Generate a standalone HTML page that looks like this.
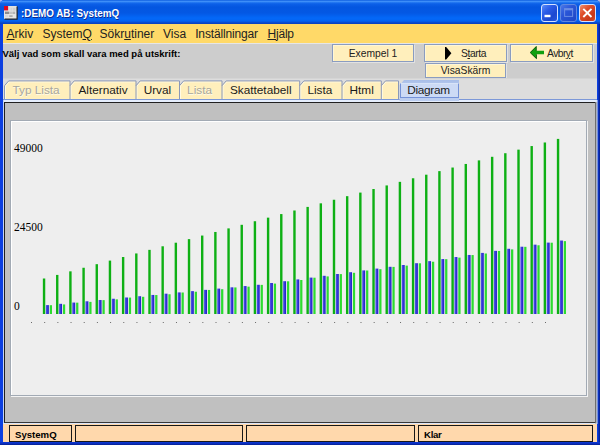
<!DOCTYPE html>
<html><head><meta charset="utf-8"><title>:DEMO AB: SystemQ</title>
<style>
html,body{margin:0;padding:0}
body{width:600px;height:445px;overflow:hidden;position:relative;background:#cdcdcd;font-family:"Liberation Sans",sans-serif;}
div{position:absolute;box-sizing:border-box}
span{position:absolute;white-space:nowrap}
#cornerl{left:0;top:0;width:300px;height:8px;background:#a4b8ee}
#cornerr{left:300px;top:0;width:300px;height:8px;background:#a8b8ea}
#frame{left:0;top:0;width:600px;height:445px;background:linear-gradient(90deg,#0c3fe0 0,#0c3fe0 598px,#08249c 599px,#08249c 600px);border-radius:4.5px 4.5px 0 0;}
#fbot{left:0;top:442px;width:600px;height:3px;background:linear-gradient(#0c3ad8,#0a2cb8 60%,#08208c)}
#title{left:0;top:0;width:600px;height:24px;border-radius:4.5px 4.5px 0 0;background:linear-gradient(#0e5ee0 0,#3e8ef8 1.5px,#2074f0 2.6px,#0c60e8 3.8px,#0456e0 7px,#0458e4 13px,#0468f8 18px,#0464f2 21px,#0a4cd0 22.5px,#0a3ebc 24px);}
#ttext{left:21px;top:5px;color:#fff;font-weight:bold;font-size:11.2px;line-height:16px;text-shadow:1px 1px 0 #0a2a90;transform:scaleX(0.88);transform-origin:0 0}
.wb{top:4px;width:17px;height:17.5px;border:1px solid #d4e2ff;border-radius:3px}
#icon{left:4px;top:5.7px;width:14px;height:14px}
#client{left:3px;top:24px;width:594px;height:418px;background:#cdcdcd}
#menu{left:3px;top:24px;width:594px;height:19px;background:#ffd968}
#menuhl{left:3px;top:43px;width:594px;height:1px;background:#e6e6e6}
.mi{top:27px;margin-left:-0.5px;font-size:12px;line-height:14px;color:#222}
u{text-decoration:underline}
#lbl{left:2.5px;top:47.7px;font-size:9.5px;font-weight:bold;color:#000;line-height:12px}
.btn{background:#ffefbc;border:1px solid #8a9cc0;box-shadow:inset 1px 1px 0 #fff6d6, 1px 1px 0 #e2e2e2;font-size:10.3px;line-height:15px;text-align:center;color:#222;white-space:nowrap}
.btn span{top:0}
#tabarea{left:3px;top:78px;width:594px;height:21px;background:linear-gradient(#d4d4d4 0,#d6d6d6 1px,#dddddd 1px)}
.tt{top:83.3px;margin-left:-0.5px;text-align:center;font-size:11.8px;line-height:14px;color:#1a1a1a}
.tt.dis{color:#a6a69e;text-shadow:0.7px 0.7px 0 #fffbe8}
#tabline{left:3px;top:99px;width:594px;height:3px;background:linear-gradient(#7c98d8 0,#7c98d8 1px,#e6eefc 1px,#e6eefc 3px)}
#lefthl{left:3px;top:100px;width:1px;height:324px;background:#c4d4f4}
#righthl{left:595px;top:100px;width:3px;height:324px}
#bothl{left:3px;top:423px;width:594px;height:1px;background:#dce6fa}
#seltab{left:399px;top:80px;width:61px;height:21px}
#selin{left:400px;top:83px;width:59px;height:15px;background:#ccdaf5;border:1px solid #7492d8;border-top:1px solid #d8e4f8}
#seltxt{left:407.3px;top:83.3px;font-size:11.8px;line-height:14px;color:#1a1a1a;letter-spacing:-0.3px}
#panel{left:4px;top:102px;width:592px;height:321px;background:#c0c0c0;border:1px solid #202020;border-right-color:#383838;border-bottom-color:#383838}
#chart{left:10px;top:120px;width:577px;height:276px;background:#eeeeee;border:1px solid #a2aab4;box-shadow:inset 1px 1px 0 #fff, 1px 1px 0 #f4f4f4}
.yl{font-family:"Liberation Serif",serif;font-size:11.5px;line-height:12px;color:#000;left:14px}
#status{left:3px;top:424px;width:594px;height:18px;background:#ffd8ac}
.sc{top:425px;height:17px;border:1px solid #181818;background:#ffd8ac;font-size:9.6px;font-weight:bold;line-height:18px;color:#000;padding-left:5px}
</style></head><body>
<div id="cornerl"></div><div id="cornerr"></div>
<div id="frame"></div>
<div id="fbot"></div>
<div id="title"></div>
<div id="icon"><svg width="14" height="14" viewBox="0 0 14 14"><rect x="0" y="0" width="13" height="13" fill="#e6e6e4"/><rect x="4" y="0.3" width="9" height="4.6" fill="#dededc"/><rect x="0" y="0" width="4.1" height="4.4" fill="#e00820"/><rect x="1" y="5.6" width="4" height="2.4" fill="#8c8c8c"/><rect x="5" y="5.6" width="3" height="2.4" fill="#c4c4c4"/><rect x="8.4" y="5.6" width="2.8" height="2.4" fill="#b4b4b4"/><rect x="5.2" y="9.4" width="3.4" height="1.4" fill="#a0a0a0"/><rect x="1" y="8.6" width="3.4" height="2.6" fill="#d8d8d8"/><rect x="9" y="2" width="2.4" height="2.6" fill="#d0d0d0"/><rect x="6.6" y="2" width="1.6" height="2.6" fill="#d4d4d4"/><path d="M0.6 13.1H13.1V0.6" stroke="#242424" stroke-width="1.2" fill="none"/></svg></div>
<span id="ttext">:DEMO AB: SystemQ</span>
<div class="wb" style="left:541px;background:linear-gradient(135deg,#5a8cf8 0,#2a5ce8 35%,#1c48d0 70%,#2858e0 100%)"><svg width="17" height="17.5" viewBox="0 0 17 17.5" style="position:absolute;left:-1px;top:-1px"><rect x="3.5" y="10.8" width="6" height="2.4" fill="#fff"/></svg></div>
<div class="wb" style="left:559.5px;background:linear-gradient(135deg,#4a78e8 0,#2a56d8 40%,#1e46c4 100%);border-color:#6088e0"><svg width="17" height="17.5" viewBox="0 0 17 17.5" style="position:absolute;left:-1px;top:-1px"><rect x="4.6" y="4.8" width="8" height="7.6" fill="none" stroke="#6a8ce4" stroke-width="1"/><rect x="4.1" y="4.3" width="9" height="2" fill="#6a8ce4"/></svg></div>
<div class="wb" style="left:579px;background:linear-gradient(135deg,#f09070 0,#e0502c 35%,#c83818 75%,#d8502c 100%)"><svg width="17" height="17.5" viewBox="0 0 17 17.5" style="position:absolute;left:-1px;top:-1px"><path d="M4.3 4.8L12.5 13M12.5 4.8L4.3 13" stroke="#fff" stroke-width="1.9" fill="none"/></svg></div>
<div id="client"></div>
<div id="menu"></div><div id="menuhl"></div>
<span class="mi" style="left:7px"><u>A</u>rkiv</span>
<span class="mi" style="left:43px">System<u>Q</u></span>
<span class="mi" style="left:100px">Sökr<u>u</u>tiner</span>
<span class="mi" style="left:163.5px">Visa</span>
<span class="mi" style="left:195.7px;letter-spacing:-0.15px">Inställningar</span>
<span class="mi" style="left:268px;letter-spacing:-0.2px"><u>H</u>jälp</span>
<span id="lbl">Välj vad som skall vara med på utskrift:</span>
<div class="btn" style="left:332px;top:44px;width:82px;height:18px;line-height:17px">Exempel 1</div>
<div class="btn" style="left:424px;top:44px;width:83px;height:18px"><svg style="position:absolute;left:20px;top:1.8px" width="7" height="13" viewBox="0 0 7 13"><path d="M0 0L1.2 0L6.4 6.2L1.2 12.6L0 12.6Z" fill="#000"/></svg><span style="left:36px;top:0.5px;letter-spacing:-0.4px">S<u>t</u>arta</span></div>
<div class="btn" style="left:510px;top:44px;width:83px;height:18px"><svg style="position:absolute;left:19px;top:1px" width="15" height="14" viewBox="0 0 15 14"><path d="M0 6.5L6.5 0L6.5 4.8H14V8.2H6.5L6.5 13Z" fill="#10a010"/><path d="M0.3 6.5L6.2 0.6V4.8M6.5 8.4V12.6L0.3 6.7" fill="none" stroke="#064a08" stroke-width="0.8"/></svg><span style="left:36px;top:0.5px;letter-spacing:-0.55px">Avbr<u>y</u>t</span></div>
<div class="btn" style="left:425px;top:63px;width:81px;height:15px;line-height:14px">VisaSkärm</div>
<div id="tabarea"></div>
<div id="tabline"></div>
<svg style="position:absolute;left:0;top:0" width="600" height="110" viewBox="0 0 600 110">
<path d="M4.5 99.0V85.7L8.7 80.9H70.0V99.0Z" fill="#ffefbc"/>
<path d="M70.0 99.0V85.7L74.2 80.9H136.0V99.0Z" fill="#ffefbc"/>
<path d="M136.0 99.0V85.7L140.2 80.9H179.5V99.0Z" fill="#ffefbc"/>
<path d="M179.5 99.0V85.7L183.7 80.9H222.0V99.0Z" fill="#ffefbc"/>
<path d="M222.0 99.0V85.7L226.2 80.9H299.7V99.0Z" fill="#ffefbc"/>
<path d="M299.7 99.0V85.7L303.9 80.9H342.0V99.0Z" fill="#ffefbc"/>
<path d="M342.0 99.0V85.7L346.2 80.9H381.3V99.0Z" fill="#ffefbc"/>
<path d="M381.3 99.0V85.7L385.5 80.9H398.5V99.0Z" fill="#ffefbc"/>
<path d="M5.5 99.0V86.10000000000001L9.1 81.9H69.5" fill="none" stroke="#fffae4" stroke-width="1"/>
<path d="M71.0 99.0V86.10000000000001L74.6 81.9H135.5" fill="none" stroke="#fffae4" stroke-width="1"/>
<path d="M137.0 99.0V86.10000000000001L140.6 81.9H179.0" fill="none" stroke="#fffae4" stroke-width="1"/>
<path d="M180.5 99.0V86.10000000000001L184.1 81.9H221.5" fill="none" stroke="#fffae4" stroke-width="1"/>
<path d="M223.0 99.0V86.10000000000001L226.6 81.9H299.2" fill="none" stroke="#fffae4" stroke-width="1"/>
<path d="M300.7 99.0V86.10000000000001L304.3 81.9H341.5" fill="none" stroke="#fffae4" stroke-width="1"/>
<path d="M343.0 99.0V86.10000000000001L346.6 81.9H380.8" fill="none" stroke="#fffae4" stroke-width="1"/>
<path d="M382.3 99.0V86.10000000000001L385.90000000000003 81.9H398.0" fill="none" stroke="#fffae4" stroke-width="1"/>
<path d="M4.5 85.7L8.7 80.9H70.0V99.0" fill="none" stroke="#8a98b8" stroke-width="1"/>
<path d="M70.0 85.7L74.2 80.9H136.0V99.0" fill="none" stroke="#8a98b8" stroke-width="1"/>
<path d="M136.0 85.7L140.2 80.9H179.5V99.0" fill="none" stroke="#8a98b8" stroke-width="1"/>
<path d="M179.5 85.7L183.7 80.9H222.0V99.0" fill="none" stroke="#8a98b8" stroke-width="1"/>
<path d="M222.0 85.7L226.2 80.9H299.7V99.0" fill="none" stroke="#8a98b8" stroke-width="1"/>
<path d="M299.7 85.7L303.9 80.9H342.0V99.0" fill="none" stroke="#8a98b8" stroke-width="1"/>
<path d="M342.0 85.7L346.2 80.9H381.3V99.0" fill="none" stroke="#8a98b8" stroke-width="1"/>
<path d="M381.3 85.7L385.5 80.9H398.5V99.0" fill="none" stroke="#8a98b8" stroke-width="1"/>
<path d="M4.5 99.0V85.7" fill="none" stroke="#8a98b8" stroke-width="1"/>
</svg>
<span class="tt dis" style="left:3.8px;width:65.5px">Typ Lista</span>
<span class="tt" style="left:70.5px;width:66.0px">Alternativ</span>
<span class="tt" style="left:136.2px;width:43.5px">Urval</span>
<span class="tt dis" style="left:178.8px;width:42.5px">Lista</span>
<span class="tt" style="left:222.4px;width:77.69999999999999px">Skattetabell</span>
<span class="tt" style="left:299.2px;width:42.30000000000001px">Lista</span>
<span class="tt" style="left:342.5px;width:39.30000000000001px">Html</span>
<div id="seltab"><svg width="61" height="21" viewBox="0 0 61 21" style="position:absolute;left:0;top:0"><defs><linearGradient id="sg" x1="0" y1="0" x2="0" y2="1"><stop offset="0" stop-color="#a8bee8"/><stop offset="0.2" stop-color="#b2c6ec"/><stop offset="1" stop-color="#bccef0"/></linearGradient></defs><path d="M0.6 21V5.6L5 0H60V21Z" fill="url(#sg)"/></svg></div><div id="selin"></div><span id="seltxt">Diagram</span>
<div id="lefthl"></div><div id="bothl"></div>
<div id="panel"></div>
<div id="chart"></div>
<div id="righthl"><svg width="3" height="324" viewBox="0 0 3 324" style="position:absolute;left:0;top:0"><rect x="0" y="2" width="3" height="322" fill="#c0c0c0"/><rect x="0" y="0" width="3" height="2" fill="#e6eefc"/><rect x="0.45" y="2" width="1" height="321" fill="#2c2c2c"/><rect x="1.45" y="0" width="1.1" height="324" fill="#d0dcf8"/><rect x="2.55" y="0" width="0.45" height="324" fill="#0c3fe0"/></svg></div>
<svg style="position:absolute;left:0;top:0" width="600" height="445" viewBox="0 0 600 445">
<defs><linearGradient id="bg" x1="0" y1="0" x2="1" y2="0"><stop offset="0" stop-color="#5458ec"/><stop offset="1" stop-color="#1a1cc4"/></linearGradient></defs>
<rect x="42.85" y="278.50" width="2.4" height="35.50" fill="#0eb014"/>
<rect x="45.90" y="305.10" width="2.95" height="8.90" fill="url(#bg)"/>
<rect x="49.75" y="305.20" width="2.25" height="8.80" fill="#2cdc30"/>
<rect x="56.03" y="274.92" width="2.4" height="39.08" fill="#0eb014"/>
<rect x="59.08" y="303.83" width="2.95" height="10.17" fill="url(#bg)"/>
<rect x="62.93" y="304.43" width="2.25" height="9.57" fill="#2cdc30"/>
<rect x="69.21" y="271.34" width="2.4" height="42.66" fill="#0eb014"/>
<rect x="72.26" y="302.56" width="2.95" height="11.44" fill="url(#bg)"/>
<rect x="76.11" y="302.66" width="2.25" height="11.34" fill="#2cdc30"/>
<rect x="82.39" y="267.76" width="2.4" height="46.24" fill="#0eb014"/>
<rect x="85.44" y="301.29" width="2.95" height="12.71" fill="url(#bg)"/>
<rect x="89.29" y="301.89" width="2.25" height="12.11" fill="#2cdc30"/>
<rect x="95.57" y="264.18" width="2.4" height="49.82" fill="#0eb014"/>
<rect x="98.62" y="300.02" width="2.95" height="13.98" fill="url(#bg)"/>
<rect x="102.47" y="300.12" width="2.25" height="13.88" fill="#2cdc30"/>
<rect x="108.75" y="260.60" width="2.4" height="53.40" fill="#0eb014"/>
<rect x="111.80" y="298.75" width="2.95" height="15.25" fill="url(#bg)"/>
<rect x="115.65" y="299.35" width="2.25" height="14.65" fill="#2cdc30"/>
<rect x="121.93" y="257.02" width="2.4" height="56.98" fill="#0eb014"/>
<rect x="124.98" y="297.48" width="2.95" height="16.52" fill="url(#bg)"/>
<rect x="128.83" y="297.58" width="2.25" height="16.42" fill="#2cdc30"/>
<rect x="135.11" y="253.44" width="2.4" height="60.56" fill="#0eb014"/>
<rect x="138.16" y="296.21" width="2.95" height="17.79" fill="url(#bg)"/>
<rect x="142.01" y="296.81" width="2.25" height="17.19" fill="#2cdc30"/>
<rect x="148.29" y="249.86" width="2.4" height="64.14" fill="#0eb014"/>
<rect x="151.34" y="294.94" width="2.95" height="19.06" fill="url(#bg)"/>
<rect x="155.19" y="295.04" width="2.25" height="18.96" fill="#2cdc30"/>
<rect x="161.47" y="246.28" width="2.4" height="67.72" fill="#0eb014"/>
<rect x="164.52" y="293.67" width="2.95" height="20.33" fill="url(#bg)"/>
<rect x="168.37" y="294.27" width="2.25" height="19.73" fill="#2cdc30"/>
<rect x="174.64" y="242.71" width="2.4" height="71.29" fill="#0eb014"/>
<rect x="177.69" y="292.40" width="2.95" height="21.60" fill="url(#bg)"/>
<rect x="181.54" y="292.50" width="2.25" height="21.50" fill="#2cdc30"/>
<rect x="187.82" y="239.13" width="2.4" height="74.87" fill="#0eb014"/>
<rect x="190.87" y="291.13" width="2.95" height="22.87" fill="url(#bg)"/>
<rect x="194.72" y="291.73" width="2.25" height="22.27" fill="#2cdc30"/>
<rect x="201.00" y="235.55" width="2.4" height="78.45" fill="#0eb014"/>
<rect x="204.05" y="289.86" width="2.95" height="24.14" fill="url(#bg)"/>
<rect x="207.90" y="289.96" width="2.25" height="24.04" fill="#2cdc30"/>
<rect x="214.18" y="231.97" width="2.4" height="82.03" fill="#0eb014"/>
<rect x="217.23" y="288.59" width="2.95" height="25.41" fill="url(#bg)"/>
<rect x="221.08" y="289.19" width="2.25" height="24.81" fill="#2cdc30"/>
<rect x="227.36" y="228.39" width="2.4" height="85.61" fill="#0eb014"/>
<rect x="230.41" y="287.32" width="2.95" height="26.68" fill="url(#bg)"/>
<rect x="234.26" y="287.42" width="2.25" height="26.58" fill="#2cdc30"/>
<rect x="240.54" y="224.81" width="2.4" height="89.19" fill="#0eb014"/>
<rect x="243.59" y="286.05" width="2.95" height="27.95" fill="url(#bg)"/>
<rect x="247.44" y="286.65" width="2.25" height="27.35" fill="#2cdc30"/>
<rect x="253.72" y="221.23" width="2.4" height="92.77" fill="#0eb014"/>
<rect x="256.77" y="284.78" width="2.95" height="29.22" fill="url(#bg)"/>
<rect x="260.62" y="284.88" width="2.25" height="29.12" fill="#2cdc30"/>
<rect x="266.90" y="217.65" width="2.4" height="96.35" fill="#0eb014"/>
<rect x="269.95" y="283.00" width="2.95" height="31.00" fill="url(#bg)"/>
<rect x="273.80" y="283.60" width="2.25" height="30.40" fill="#2cdc30"/>
<rect x="280.08" y="214.07" width="2.4" height="99.93" fill="#0eb014"/>
<rect x="283.13" y="281.20" width="2.95" height="32.80" fill="url(#bg)"/>
<rect x="286.98" y="281.30" width="2.25" height="32.70" fill="#2cdc30"/>
<rect x="293.26" y="210.49" width="2.4" height="103.51" fill="#0eb014"/>
<rect x="296.31" y="279.40" width="2.95" height="34.60" fill="url(#bg)"/>
<rect x="300.16" y="280.00" width="2.25" height="34.00" fill="#2cdc30"/>
<rect x="306.44" y="206.91" width="2.4" height="107.09" fill="#0eb014"/>
<rect x="309.49" y="277.60" width="2.95" height="36.40" fill="url(#bg)"/>
<rect x="313.34" y="277.70" width="2.25" height="36.30" fill="#2cdc30"/>
<rect x="319.62" y="203.33" width="2.4" height="110.67" fill="#0eb014"/>
<rect x="322.67" y="275.80" width="2.95" height="38.20" fill="url(#bg)"/>
<rect x="326.52" y="276.40" width="2.25" height="37.60" fill="#2cdc30"/>
<rect x="332.80" y="199.75" width="2.4" height="114.25" fill="#0eb014"/>
<rect x="335.85" y="274.00" width="2.95" height="40.00" fill="url(#bg)"/>
<rect x="339.70" y="274.10" width="2.25" height="39.90" fill="#2cdc30"/>
<rect x="345.98" y="196.17" width="2.4" height="117.83" fill="#0eb014"/>
<rect x="349.03" y="272.20" width="2.95" height="41.80" fill="url(#bg)"/>
<rect x="352.88" y="272.80" width="2.25" height="41.20" fill="#2cdc30"/>
<rect x="359.16" y="192.59" width="2.4" height="121.41" fill="#0eb014"/>
<rect x="362.21" y="270.40" width="2.95" height="43.60" fill="url(#bg)"/>
<rect x="366.06" y="270.50" width="2.25" height="43.50" fill="#2cdc30"/>
<rect x="372.34" y="189.01" width="2.4" height="124.99" fill="#0eb014"/>
<rect x="375.39" y="268.60" width="2.95" height="45.40" fill="url(#bg)"/>
<rect x="379.24" y="269.20" width="2.25" height="44.80" fill="#2cdc30"/>
<rect x="385.52" y="185.43" width="2.4" height="128.57" fill="#0eb014"/>
<rect x="388.57" y="266.80" width="2.95" height="47.20" fill="url(#bg)"/>
<rect x="392.42" y="266.90" width="2.25" height="47.10" fill="#2cdc30"/>
<rect x="398.70" y="181.85" width="2.4" height="132.15" fill="#0eb014"/>
<rect x="401.75" y="265.00" width="2.95" height="49.00" fill="url(#bg)"/>
<rect x="405.60" y="265.60" width="2.25" height="48.40" fill="#2cdc30"/>
<rect x="411.88" y="178.27" width="2.4" height="135.73" fill="#0eb014"/>
<rect x="414.93" y="263.20" width="2.95" height="50.80" fill="url(#bg)"/>
<rect x="418.78" y="263.30" width="2.25" height="50.70" fill="#2cdc30"/>
<rect x="425.06" y="174.69" width="2.4" height="139.31" fill="#0eb014"/>
<rect x="428.11" y="261.14" width="2.95" height="52.86" fill="url(#bg)"/>
<rect x="431.96" y="261.74" width="2.25" height="52.26" fill="#2cdc30"/>
<rect x="438.23" y="171.12" width="2.4" height="142.88" fill="#0eb014"/>
<rect x="441.28" y="259.08" width="2.95" height="54.92" fill="url(#bg)"/>
<rect x="445.13" y="259.18" width="2.25" height="54.82" fill="#2cdc30"/>
<rect x="451.41" y="167.54" width="2.4" height="146.46" fill="#0eb014"/>
<rect x="454.46" y="257.02" width="2.95" height="56.98" fill="url(#bg)"/>
<rect x="458.31" y="257.62" width="2.25" height="56.38" fill="#2cdc30"/>
<rect x="464.59" y="163.96" width="2.4" height="150.04" fill="#0eb014"/>
<rect x="467.64" y="254.96" width="2.95" height="59.04" fill="url(#bg)"/>
<rect x="471.49" y="255.06" width="2.25" height="58.94" fill="#2cdc30"/>
<rect x="477.77" y="160.38" width="2.4" height="153.62" fill="#0eb014"/>
<rect x="480.82" y="252.90" width="2.95" height="61.10" fill="url(#bg)"/>
<rect x="484.67" y="253.50" width="2.25" height="60.50" fill="#2cdc30"/>
<rect x="490.95" y="156.80" width="2.4" height="157.20" fill="#0eb014"/>
<rect x="494.00" y="250.84" width="2.95" height="63.16" fill="url(#bg)"/>
<rect x="497.85" y="250.94" width="2.25" height="63.06" fill="#2cdc30"/>
<rect x="504.13" y="153.22" width="2.4" height="160.78" fill="#0eb014"/>
<rect x="507.18" y="248.78" width="2.95" height="65.22" fill="url(#bg)"/>
<rect x="511.03" y="249.38" width="2.25" height="64.62" fill="#2cdc30"/>
<rect x="517.31" y="149.64" width="2.4" height="164.36" fill="#0eb014"/>
<rect x="520.36" y="246.72" width="2.95" height="67.28" fill="url(#bg)"/>
<rect x="524.21" y="246.82" width="2.25" height="67.18" fill="#2cdc30"/>
<rect x="530.49" y="146.06" width="2.4" height="167.94" fill="#0eb014"/>
<rect x="533.54" y="244.66" width="2.95" height="69.34" fill="url(#bg)"/>
<rect x="537.39" y="245.26" width="2.25" height="68.74" fill="#2cdc30"/>
<rect x="543.67" y="142.48" width="2.4" height="171.52" fill="#0eb014"/>
<rect x="546.72" y="242.60" width="2.95" height="71.40" fill="url(#bg)"/>
<rect x="550.57" y="242.70" width="2.25" height="71.30" fill="#2cdc30"/>
<rect x="556.85" y="138.90" width="2.4" height="175.10" fill="#0eb014"/>
<rect x="559.90" y="240.54" width="2.95" height="73.46" fill="url(#bg)"/>
<rect x="563.75" y="241.14" width="2.25" height="72.86" fill="#2cdc30"/>
<rect x="31.00" y="322" width="1" height="1" fill="#6a6a6a"/>
<rect x="44.18" y="322" width="1" height="1" fill="#6a6a6a"/>
<rect x="57.36" y="322" width="1" height="1" fill="#6a6a6a"/>
<rect x="70.54" y="322" width="1" height="1" fill="#6a6a6a"/>
<rect x="83.72" y="322" width="1" height="1" fill="#6a6a6a"/>
<rect x="96.90" y="322" width="1" height="1" fill="#6a6a6a"/>
<rect x="110.08" y="322" width="1" height="1" fill="#6a6a6a"/>
<rect x="123.26" y="322" width="1" height="1" fill="#6a6a6a"/>
<rect x="136.44" y="322" width="1" height="1" fill="#6a6a6a"/>
<rect x="149.62" y="322" width="1" height="1" fill="#6a6a6a"/>
<rect x="162.79" y="322" width="1" height="1" fill="#6a6a6a"/>
<rect x="175.97" y="322" width="1" height="1" fill="#6a6a6a"/>
<rect x="189.15" y="322" width="1" height="1" fill="#6a6a6a"/>
<rect x="202.33" y="322" width="1" height="1" fill="#6a6a6a"/>
<rect x="215.51" y="322" width="1" height="1" fill="#6a6a6a"/>
<rect x="228.69" y="322" width="1" height="1" fill="#6a6a6a"/>
<rect x="241.87" y="322" width="1" height="1" fill="#6a6a6a"/>
<rect x="255.05" y="322" width="1" height="1" fill="#6a6a6a"/>
<rect x="268.23" y="322" width="1" height="1" fill="#6a6a6a"/>
<rect x="281.41" y="322" width="1" height="1" fill="#6a6a6a"/>
<rect x="294.59" y="322" width="1" height="1" fill="#6a6a6a"/>
<rect x="307.77" y="322" width="1" height="1" fill="#6a6a6a"/>
<rect x="320.95" y="322" width="1" height="1" fill="#6a6a6a"/>
<rect x="334.13" y="322" width="1" height="1" fill="#6a6a6a"/>
<rect x="347.31" y="322" width="1" height="1" fill="#6a6a6a"/>
<rect x="360.49" y="322" width="1" height="1" fill="#6a6a6a"/>
<rect x="373.67" y="322" width="1" height="1" fill="#6a6a6a"/>
<rect x="386.85" y="322" width="1" height="1" fill="#6a6a6a"/>
<rect x="400.03" y="322" width="1" height="1" fill="#6a6a6a"/>
<rect x="413.21" y="322" width="1" height="1" fill="#6a6a6a"/>
<rect x="426.38" y="322" width="1" height="1" fill="#6a6a6a"/>
<rect x="439.56" y="322" width="1" height="1" fill="#6a6a6a"/>
<rect x="452.74" y="322" width="1" height="1" fill="#6a6a6a"/>
<rect x="465.92" y="322" width="1" height="1" fill="#6a6a6a"/>
<rect x="479.10" y="322" width="1" height="1" fill="#6a6a6a"/>
<rect x="492.28" y="322" width="1" height="1" fill="#6a6a6a"/>
<rect x="505.46" y="322" width="1" height="1" fill="#6a6a6a"/>
<rect x="518.64" y="322" width="1" height="1" fill="#6a6a6a"/>
<rect x="531.82" y="322" width="1" height="1" fill="#6a6a6a"/>
<rect x="545.00" y="322" width="1" height="1" fill="#6a6a6a"/>
</svg>
<span class="yl" style="top:142px">49000</span>
<span class="yl" style="top:221px">24500</span>
<span class="yl" style="top:300px">0</span>
<div id="status"></div>
<div class="sc" style="left:9px;width:63px">SystemQ</div>
<div class="sc" style="left:75px;width:168px"></div>
<div class="sc" style="left:246px;width:168.5px"></div>
<div class="sc" style="left:418px;width:175px;letter-spacing:-0.3px">Klar</div>
</body></html>
